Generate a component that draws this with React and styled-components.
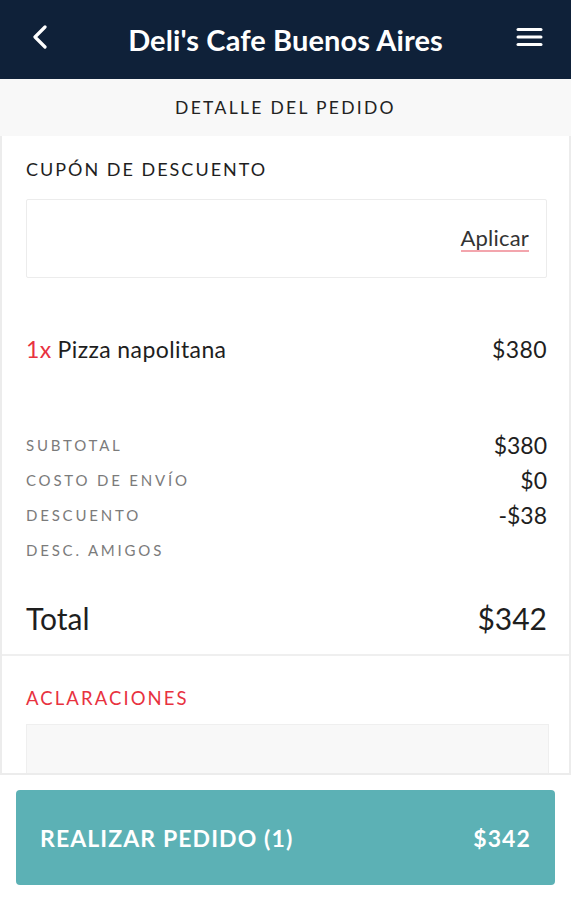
import React from "react";
import styled, { createGlobalStyle } from "styled-components";

const GlobalStyle = createGlobalStyle`
  * { box-sizing: border-box; }
  html, body { margin: 0; padding: 0; background: #fff; }
  body { font-family: Lato, "Open Sans", sans-serif; color: #1e1e1e; }
`;

const Page = styled.div`
  width: 571px;
  height: 900px;
  display: flex;
  flex-direction: column;
  overflow: hidden;
`;

const TopBar = styled.header`
  height: 79px;
  background: #0f2139;
  display: grid;
  grid-template-columns: 80px 1fr 80px;
  align-items: center;
  color: #fff;
  flex-shrink: 0;
`;

const Title = styled.h1`
  margin: 0;
  text-align: center;
  font-size: 29px;
  font-weight: 700;
  letter-spacing: 0.1px;
`;

const IconSlot = styled.div`
  display: flex;
  justify-content: ${(p) => (p.$right ? "flex-end" : "flex-start")};
  padding: ${(p) => (p.$right ? "0 28px 6px 0" : "0 0 6px 32px")};
`;

const SubHeader = styled.div`
  height: 57px;
  background: #f8f8f8;
  display: flex;
  align-items: center;
  justify-content: center;
  font-size: 17.5px;
  letter-spacing: 2.3px;
  color: #222;
  flex-shrink: 0;
`;

const Content = styled.main`
  flex: 1;
  border-left: 2px solid #ececec;
  border-right: 2px solid #ececec;
  overflow: hidden;
`;

const Section = styled.section`
  padding: ${(p) => p.$pad || "0 24px"};
  border-bottom: ${(p) => (p.$divider ? "2px solid #efefef" : "none")};
`;

const SectionLabel = styled.div`
  font-size: ${(p) => (p.$accent ? "18.5px" : "18px")};
  letter-spacing: ${(p) => (p.$accent ? "2.1px" : "2px")};
  color: ${(p) => (p.$accent ? "#e8323f" : "#1e1e1e")};
  margin-bottom: ${(p) => p.$gap || "19px"};
`;

const CouponBox = styled.div`
  height: 79px;
  border: 1.5px solid #ececec;
  border-radius: 2px;
  display: flex;
  align-items: center;
  justify-content: flex-end;
  padding: 0 17px 0 0;
`;

const ApplyLink = styled.span`
  font-size: 22px;
  color: #333;
  line-height: 1.15;
  border-bottom: 2px solid #f3a5ad;
  letter-spacing: 0.2px;
`;

const ItemRow = styled.div`
  display: flex;
  justify-content: space-between;
  align-items: center;
  font-size: 23px;
  letter-spacing: 0.4px;
  margin: 57px 0 0;
`;

const Qty = styled.span`
  color: #e8323f;
  margin-right: 6px;
`;

const Summary = styled.div`
  margin-top: 67px;
  display: flex;
  flex-direction: column;
  gap: 6px;
`;

const SummaryRow = styled.div`
  height: 29px;
  display: flex;
  justify-content: space-between;
  align-items: center;
`;

const SummaryLabel = styled.span`
  font-size: 15px;
  letter-spacing: 2.8px;
  color: #7b7b7b;
`;

const SummaryValue = styled.span`
  font-size: 23px;
  color: #1e1e1e;
`;

const TotalRow = styled.div`
  display: flex;
  justify-content: space-between;
  align-items: center;
  font-size: 30px;
  margin-top: 36px;
  padding-bottom: 18px;
`;

const NotesBox = styled.div`
  height: 60px;
  background: #f8f8f8;
  border: 1.5px solid #efefef;
  margin-right: -2px;
`;

const Footer = styled.footer`
  height: 127px;
  border-top: 2px solid #ececec;
  padding: 15px 16px 0;
  flex-shrink: 0;
  background: #fff;
`;

const OrderButton = styled.button`
  width: 100%;
  height: 95px;
  border: none;
  border-radius: 4px;
  background: #5cb1b5;
  color: #fff;
  font-family: inherit;
  font-size: 23px;
  font-weight: 700;
  letter-spacing: 1.1px;
  display: flex;
  justify-content: space-between;
  align-items: center;
  padding: 0 24px 0 24px;
`;

const BackIcon = () => (
  <svg width="16" height="24" viewBox="0 0 16 24">
    <path d="M13 2 L3 12 L13 22" fill="none" stroke="#fff" strokeWidth="3.2" strokeLinecap="round" strokeLinejoin="round" />
  </svg>
);

const MenuIcon = () => (
  <svg width="27" height="20" viewBox="0 0 27 20">
    <g stroke="#fff" strokeWidth="3" strokeLinecap="round">
      <line x1="2" y1="2.5" x2="25" y2="2.5" />
      <line x1="2" y1="10" x2="25" y2="10" />
      <line x1="2" y1="17.5" x2="25" y2="17.5" />
    </g>
  </svg>
);

const summary = [
  { label: "SUBTOTAL", value: "$380" },
  { label: "COSTO DE ENVÍO", value: "$0" },
  { label: "DESCUENTO", value: "-$38" },
  { label: "DESC. AMIGOS", value: "" },
];

export default function App() {
  return (
    <Page>
      <GlobalStyle />
      <TopBar>
        <IconSlot>
          <BackIcon />
        </IconSlot>
        <Title>Deli's Cafe Buenos Aires</Title>
        <IconSlot $right>
          <MenuIcon />
        </IconSlot>
      </TopBar>
      <SubHeader>DETALLE DEL PEDIDO</SubHeader>
      <Content>
        <Section $pad="22px 22px 0 24px" $divider>
          <SectionLabel>CUPÓN DE DESCUENTO</SectionLabel>
          <CouponBox>
            <ApplyLink>Aplicar</ApplyLink>
          </CouponBox>
          <ItemRow>
            <span>
              <Qty>1x</Qty>Pizza napolitana
            </span>
            <span>$380</span>
          </ItemRow>
          <Summary>
            {summary.map((row) => (
              <SummaryRow key={row.label}>
                <SummaryLabel>{row.label}</SummaryLabel>
                <SummaryValue>{row.value}</SummaryValue>
              </SummaryRow>
            ))}
          </Summary>
          <TotalRow>
            <span>Total</span>
            <span>$342</span>
          </TotalRow>
        </Section>
        <Section $pad="31px 22px 0 24px">
          <SectionLabel $accent $gap="15px">ACLARACIONES</SectionLabel>
          <NotesBox />
        </Section>
      </Content>
      <Footer>
        <OrderButton>
          <span>REALIZAR PEDIDO (1)</span>
          <span>$342</span>
        </OrderButton>
      </Footer>
    </Page>
  );
}
